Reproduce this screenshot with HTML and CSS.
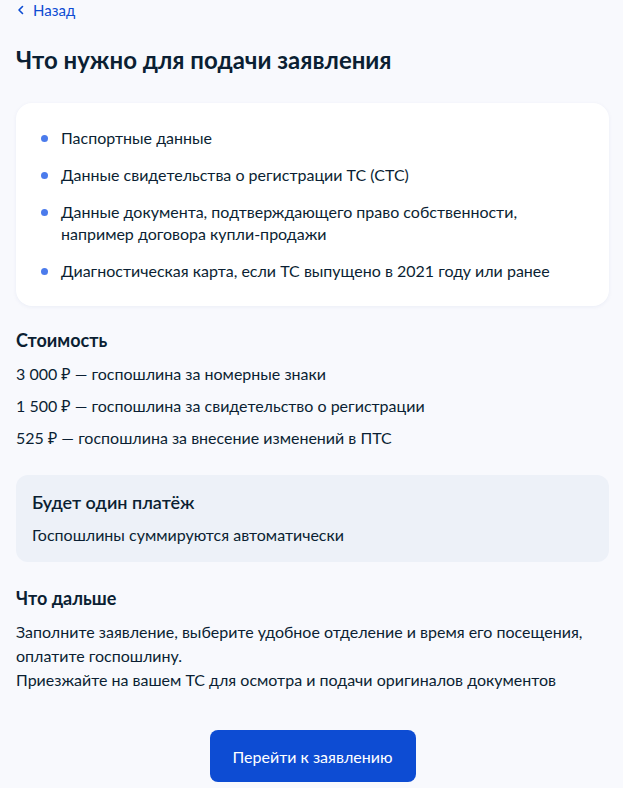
FILE: index.html
```html
<!DOCTYPE html>
<html lang="ru">
<head>
<meta charset="utf-8">
<link rel="stylesheet" href="styles.css">
</head>
<body>
<div class="page">
  <a class="back" href="#">
    <svg class="back-icon" width="8" height="10" viewBox="0 0 8 10"><path d="M5.5 1.5 L2 5 L5.5 8.5" fill="none" stroke="#0d4cd3" stroke-width="1.6" stroke-linecap="round" stroke-linejoin="round"/></svg>
    <span>Назад</span>
  </a>
  <h1 class="title">Что нужно для подачи заявления</h1>
  <div class="card">
    <ul class="list">
      <li>Паспортные данные</li>
      <li>Данные свидетельства о регистрации ТС (СТС)</li>
      <li>Данные документа, подтверждающего право собственности, например договора купли-продажи</li>
      <li>Диагностическая карта, если ТС выпущено в 2021 году или ранее</li>
    </ul>
  </div>
  <h2 class="section-title">Стоимость</h2>
  <div class="prices">
    <p>3 000 ₽ — госпошлина за номерные знаки</p>
    <p>1 500 ₽ — госпошлина за свидетельство о регистрации</p>
    <p>525 ₽ — госпошлина за внесение изменений в ПТС</p>
  </div>
  <div class="info">
    <div class="info-title">Будет один платёж</div>
    <div class="info-text">Госпошлины суммируются автоматически</div>
  </div>
  <h2 class="section-title next-title">Что дальше</h2>
  <p class="next-text">Заполните заявление, выберите удобное отделение и время его посещения, оплатите госпошлину.<br>Приезжайте на вашем ТС для осмотра и подачи оригиналов документов</p>
  <div class="actions">
    <button class="btn">Перейти к заявлению</button>
  </div>
</div>
</body>
</html>
```
FILE: styles.css
```css
* { box-sizing: border-box; }
html, body { margin: 0; padding: 0; }
body {
  background: #f8f9fd;
  font-family: Lato, "Noto Sans", sans-serif;
  color: #0b1f33;
}
.page {
  padding: 0 14px 0 16px;
}
.back {
  display: flex;
  align-items: center;
  gap: 8px;
  height: 20px;
  color: #0d4cd3;
  text-decoration: none;
  font-size: 15px;
  line-height: 20px;
}
.back-icon { margin-left: 1px; }
.title {
  margin: 25px 0 0;
  font-size: 24px;
  line-height: 30px;
  font-weight: 700;
}
.card {
  margin-top: 28px;
  background: #fff;
  border-radius: 16px;
  box-shadow: 0 1px 4px rgba(14, 55, 140, 0.06);
  padding: 24px 24px;
}
.list {
  list-style: none;
  margin: 0;
  padding: 0;
  display: flex;
  flex-direction: column;
  gap: 15px;
}
.list li {
  position: relative;
  padding-left: 21px;
  font-size: 16px;
  line-height: 22px;
}
.list li::before {
  content: "";
  position: absolute;
  left: 1px;
  top: 8px;
  width: 7px;
  height: 7px;
  border-radius: 50%;
  background: #4b7bec;
}
.section-title {
  margin: 22px 0 0;
  font-size: 18px;
  line-height: 24px;
  font-weight: 700;
}
.prices {
  margin-top: 10px;
  display: flex;
  flex-direction: column;
  gap: 8px;
}
.prices p {
  margin: 0;
  font-size: 16px;
  line-height: 24px;
}
.info {
  margin-top: 25px;
  background: #edf1f8;
  border-radius: 12px;
  padding: 15px 16px 15px;
}
.info-title {
  font-size: 18px;
  line-height: 24px;
  font-weight: 600;
}
.info-text {
  margin-top: 9px;
  font-size: 16px;
  line-height: 24px;
}
.next-title { margin-top: 24px; }
.next-text {
  margin: 10px 0 0;
  font-size: 16px;
  line-height: 24px;
}
.actions {
  margin-top: 38px;
  display: flex;
  justify-content: center;
}
.btn {
  width: 206px;
  height: 52px;
  border: 0;
  border-radius: 8px;
  background: #0d4cd3;
  color: #fff;
  font-family: Lato, "Noto Sans", sans-serif;
  font-size: 16px;
}
```
